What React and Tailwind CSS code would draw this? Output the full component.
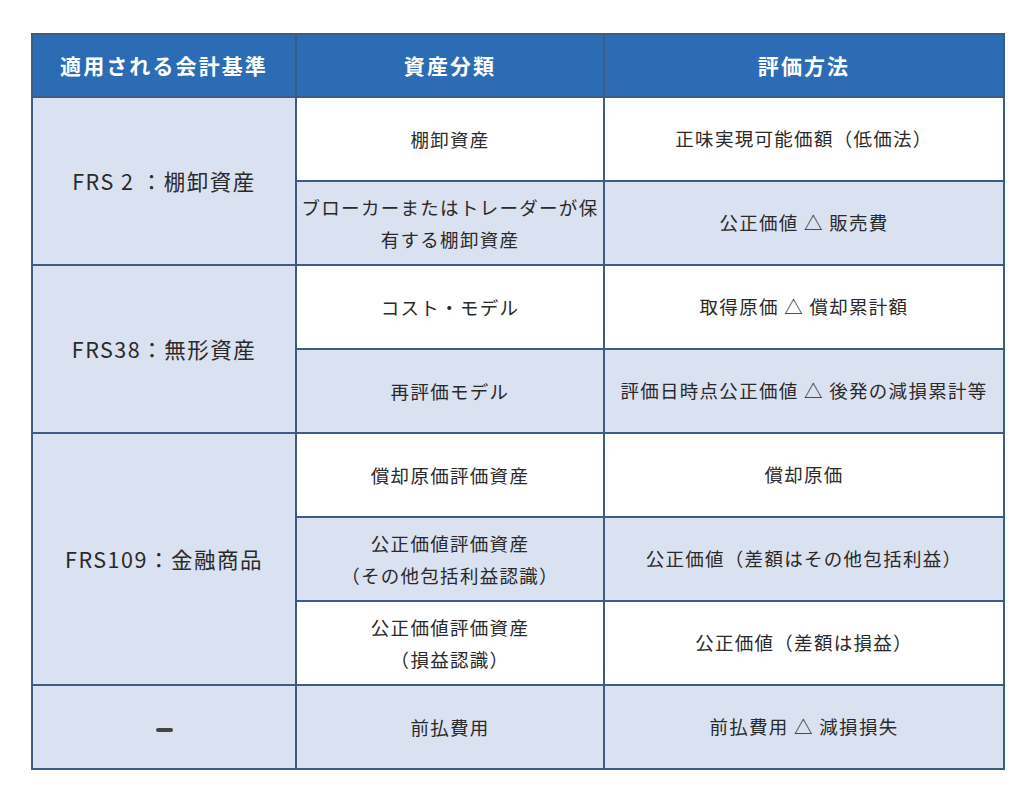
const rows = [
  { std: "FRS 2 ：棚卸資産", span: 2, cls: "棚卸資産", val: "正味実現可能価額（低価法）" },
  { cls: ["ブローカーまたはトレーダーが保", "有する棚卸資産"], val: "公正価値 △ 販売費" },
  { std: "FRS38：無形資産", span: 2, cls: "コスト・モデル", val: "取得原価 △ 償却累計額" },
  { cls: "再評価モデル", val: "評価日時点公正価値 △ 後発の減損累計等" },
  { std: "FRS109：金融商品", span: 3, cls: "償却原価評価資産", val: "償却原価" },
  { cls: ["公正価値評価資産", "（その他包括利益認識）"], val: "公正価値（差額はその他包括利益）" },
  { cls: ["公正価値評価資産", "（損益認識）"], val: "公正価値（差額は損益）" },
  { std: "—", span: 1, cls: "前払費用", val: "前払費用 △ 減損損失", dash: true },
];

const font = { fontFamily: '"Noto Sans CJK JP", "Noto Sans", sans-serif' };

function Lines({ v }) {
  if (Array.isArray(v)) return v.map((l, i) => <div key={i}>{l}</div>);
  return v;
}

export default function App() {
  return (
    <div className="w-[1024px] h-[796px] bg-white pt-[33px] pl-[31px]" style={font}>
      <table className="border-collapse border-2 border-[#3c5b85] text-[#2a2a2a] table-fixed w-[972px]">
        <colgroup>
          <col className="w-[264px]" />
          <col className="w-[308px]" />
          <col className="w-[400px]" />
        </colgroup>
        <thead>
          <tr className="bg-[#2c6cb4] text-white h-[63px]">
            <th className="border-2 border-[#3c5b85] text-[21px] font-bold tracking-[0.1em]">適用される会計基準</th>
            <th className="border-2 border-[#3c5b85] text-[21px] font-bold tracking-[0.1em]">資産分類</th>
            <th className="border-2 border-[#3c5b85] text-[21px] font-bold tracking-[0.1em]">評価方法</th>
          </tr>
        </thead>
        <tbody>
          {rows.map((r, i) => {
            const bg = i % 2 === 0 ? "bg-white" : "bg-[#dae1f0]";
            return (
              <tr key={i} className="h-[84px]">
                {r.std && (
                  <td
                    rowSpan={r.span}
                    className="border-2 border-[#3c5b85] bg-[#dae1f0] text-center text-[21.5px] tracking-[0.07em]"
                  >
                    {r.dash ? (
                      <span className="inline-block w-[17px] h-[4px] bg-[#444] rounded-sm align-middle" />
                    ) : (
                      r.std
                    )}
                  </td>
                )}
                <td className={`border-2 border-[#3c5b85] ${bg} text-center text-[18.5px] leading-[32px] tracking-[0.07em]`}>
                  <Lines v={r.cls} />
                </td>
                <td className={`border-2 border-[#3c5b85] ${bg} text-center text-[18.5px] tracking-[0.07em]`}>
                  {r.val}
                </td>
              </tr>
            );
          })}
        </tbody>
      </table>
    </div>
  );
}
